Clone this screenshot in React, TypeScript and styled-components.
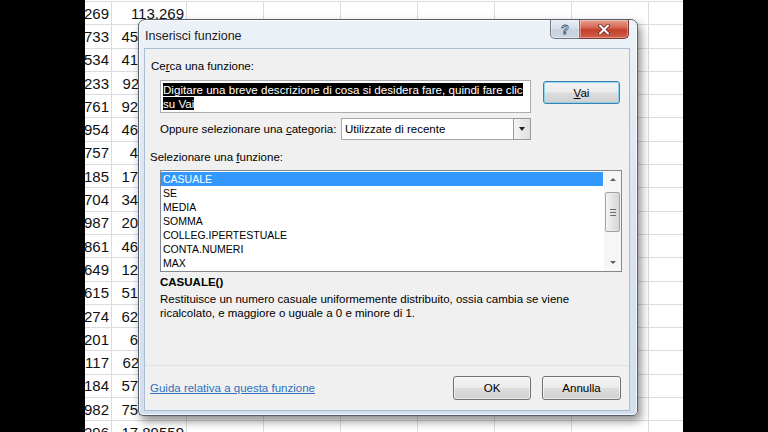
import React from 'react';
import styled, { createGlobalStyle } from 'styled-components';

const GlobalStyle = createGlobalStyle`
	html, body {
		margin: 0;
		padding: 0;
		background: #000;
	}
	body {
		font-family: "Liberation Sans", Arial, sans-serif;
	}
`;

const uiFont = `"Liberation Sans", Arial, sans-serif`;

const Screen = styled.div`
	display: flex;
	width: 768px;
	height: 432px;
	overflow: hidden;
	background: #000;
`;

const Letterbox = styled.div<{ $w: number }>`
	flex: 0 0 ${(p) => p.$w}px;
	background: #000;
`;

const Sheet = styled.div`
	position: relative;
	flex: 1;
	overflow: hidden;
	background: #fff;
`;

const Grid = styled.div`
	display: grid;
	grid-template-columns: 27px 75px repeat(7, 77px);
	grid-auto-rows: 23.3px;
	margin-top: 1px;
	border-top: 1px solid #dadcdd;
`;

const Cell = styled.div`
	display: flex;
	align-items: center;
	justify-content: flex-end;
	box-sizing: border-box;
	padding-right: 2px;
	border-right: 1px solid #dadcdd;
	border-bottom: 1px solid #dadcdd;
	overflow: hidden;
	white-space: nowrap;
	font-family: ${uiFont};
	font-size: 15px;
	color: #111;
`;

/* dialog window */

const Dialog = styled.div`
	position: absolute;
	left: 53px;
	top: 19px;
	width: 500px;
	height: 397px;
	box-sizing: border-box;
	display: flex;
	flex-direction: column;
	padding: 0 8px 5px 6px;
	border: 1px solid #56606d;
	border-radius: 7px 7px 5px 5px;
	background: linear-gradient(#edf2f8, #dbe5f1 40%, #d3dfed);
	box-shadow: 3px 5px 10px rgba(0, 0, 0, 0.45), inset 0 0 0 1px rgba(255, 255, 255, 0.75);
`;

const TitleBar = styled.div`
	display: flex;
	align-items: flex-start;
	flex: 0 0 29px;
`;

const Title = styled.div`
	flex: 1;
	align-self: center;
	padding-top: 2px;
	font-family: ${uiFont};
	font-size: 12.5px;
	color: #1c1c1c;
`;

const CaptionButton = styled.div<{ $close?: boolean }>`
	display: flex;
	align-items: center;
	justify-content: center;
	height: 19px;
	width: ${(p) => (p.$close ? 49 : 30)}px;
	box-sizing: border-box;
	border: 1px solid ${(p) => (p.$close ? '#7b3630' : '#6d7888')};
	border-top: none;
	${(p) => (p.$close ? 'border-left: none;' : '')}
	border-radius: ${(p) => (p.$close ? '0 0 5px 0' : '0 0 0 5px')};
	background: ${(p) =>
		p.$close
			? 'linear-gradient(#e6a08f 0%, #d56a56 40%, #c3402c 55%, #d2604a 100%)'
			: 'linear-gradient(#e9eef4 0%, #d7dfe9 45%, #c6d1de 55%, #cfd8e4 100%)'};
	box-shadow: inset 0 0 0 1px rgba(255, 255, 255, 0.35);
`;

const HelpGlyph = styled.span`
	font-family: ${uiFont};
	font-size: 13px;
	font-weight: bold;
	color: #e9eef4;
	-webkit-text-stroke: 0.8px #4a5566;
	line-height: 1;
`;

const Client = styled.div`
	flex: 1;
	display: flex;
	flex-direction: column;
	background: #f0f0f0;
	box-shadow: 0 0 0 1px #a9bdd6;
	font-family: ${uiFont};
	font-size: 11.5px;
	color: #000;
`;

const Label = styled.div<{ $indent: number; $top: number }>`
	margin-top: ${(p) => p.$top}px;
	padding-left: ${(p) => p.$indent}px;
	line-height: 14px;
	white-space: nowrap;
`;

const Row = styled.div<{ $top: number }>`
	display: flex;
	align-items: flex-start;
	margin-top: ${(p) => p.$top}px;
	padding-left: 15px;
`;

const SearchBox = styled.div`
	width: 371px;
	height: 33px;
	box-sizing: border-box;
	padding: 2px 2px;
	border: 1px solid #abadb3;
	background: #fff;
	font-size: 11.6px;
	line-height: 13.5px;
	white-space: nowrap;
`;

const Selected = styled.span`
	background: #000;
	color: #fff;
`;

const Button = styled.div<{ $w: number; $default?: boolean }>`
	display: flex;
	align-items: center;
	justify-content: center;
	width: ${(p) => p.$w}px;
	height: 24px;
	box-sizing: border-box;
	border: 1px solid ${(p) => (p.$default ? '#3c7fb1' : '#707070')};
	border-radius: 3px;
	background: linear-gradient(#f3f3f3 0%, #ebebeb 48%, #dddddd 52%, #d0d0d0 100%);
	box-shadow: inset 0 0 0 1px ${(p) => (p.$default ? 'rgba(120, 210, 240, 0.8)' : 'rgba(255, 255, 255, 0.6)')};
	font-size: 11.5px;
	color: #000;
`;

const VaiButton = styled(Button)`
	margin-top: 1px;
	margin-left: 12px;
	height: 23px;
`;

const CategoryLabel = styled.div`
	width: 181px;
	align-self: center;
	white-space: nowrap;
`;

const Select = styled.div`
	display: flex;
	width: 190px;
	height: 22px;
	box-sizing: border-box;
	border: 1px solid #a7a7a7;
	background: #fff;
`;

const SelectValue = styled.div`
	flex: 1;
	display: flex;
	align-items: center;
	padding-left: 3px;
	white-space: nowrap;
`;

const DropButton = styled.div`
	display: flex;
	align-items: center;
	justify-content: center;
	width: 18px;
	box-sizing: border-box;
	border: 1px solid #9a9a9a;
	margin: -1px -1px -1px 0;
	background: linear-gradient(to right, #f4f4f4, #dedede);
`;

const DownTriangle = styled.span`
	width: 0;
	height: 0;
	border-left: 3.5px solid transparent;
	border-right: 3.5px solid transparent;
	border-top: 4px solid #222;
`;

const ListBox = styled.div`
	display: flex;
	width: 462px;
	height: 102px;
	box-sizing: border-box;
	margin: 6px 0 0 15px;
	border: 1px solid #828790;
	background: #fff;
`;

const ListItems = styled.div`
	flex: 1;
	padding-top: 1px;
`;

const ListItem = styled.div<{ $selected?: boolean }>`
	height: 14px;
	line-height: 14px;
	padding-left: 2px;
	margin-right: 1px;
	font-size: 10.5px;
	background: ${(p) => (p.$selected ? '#3399ff' : 'transparent')};
	color: ${(p) => (p.$selected ? '#fff' : '#000')};
`;

const ScrollBar = styled.div`
	display: flex;
	flex-direction: column;
	width: 17px;
	background: #f6f6f6;
`;

const ScrollArrow = styled.div<{ $up?: boolean }>`
	display: flex;
	align-items: center;
	justify-content: center;
	height: 17px;
	&::after {
		content: '';
		width: 0;
		height: 0;
		border-left: 3px solid transparent;
		border-right: 3px solid transparent;
		${(p) => (p.$up ? 'border-bottom: 3px solid #5e5e5e;' : 'border-top: 3px solid #5e5e5e;')}
	}
`;

const ScrollTrack = styled.div`
	flex: 1;
`;

const Thumb = styled.div`
	display: flex;
	flex-direction: column;
	align-items: center;
	justify-content: center;
	gap: 2px;
	height: 40px;
	margin: 4px 1px 0 1px;
	box-sizing: border-box;
	border: 1px solid #a2a2a2;
	border-radius: 2px;
	background: linear-gradient(to right, #f5f5f5, #e4e4e4 50%, #d6d6d6);
`;

const Grip = styled.span`
	width: 6px;
	height: 1px;
	background: #6f6f6f;
`;

const Signature = styled.div`
	margin-top: 3px;
	padding-left: 15px;
	line-height: 14px;
	font-weight: bold;
`;

const Description = styled.div`
	margin-top: 3px;
	padding-left: 15px;
	line-height: 14px;
	white-space: nowrap;
`;

const Spacer = styled.div`
	flex: 1;
`;

const Footer = styled.div`
	display: flex;
	align-items: center;
	gap: 11px;
	height: 45px;
	box-sizing: border-box;
	padding: 0 8px 0 5px;
	border-top: 1px solid #e2e2e2;
`;

const HelpLink = styled.a`
	flex: 1;
	color: #2f6fbf;
	text-decoration: underline;
	cursor: pointer;
`;

const colA = ['97.269', '8.733', '6.534', '3.233', '4.761', '1.954', '5.757', '3.185', '2.704', '6.987', '3.861', '7.649', '4.615', '5.274', '8.201', '2.117', '9.184', '1.982', '4.296'];
const colB = ['113.269', '45.96733', '41.72534', '92.11233', '92.84761', '46.37954', '4.75757', '17.44185', '34.86704', '20.51987', '46.32861', '12.67649', '51.29615', '62.48274', '6.35201', '62.09117', '57.63184', '75.18982', '17.89559'];

const functions = ['CASUALE', 'SE', 'MEDIA', 'SOMMA', 'COLLEG.IPERTESTUALE', 'CONTA.NUMERI', 'MAX'];

const CloseIcon = () => (
	<svg width="14" height="11" viewBox="0 0 14 11">
		<path d="M3 1.5 L11 9.5 M11 1.5 L3 9.5" stroke="#6a231c" strokeWidth="3.6" strokeLinecap="round" />
		<path d="M3 1.5 L11 9.5 M11 1.5 L3 9.5" stroke="#fff" strokeWidth="2" strokeLinecap="round" />
	</svg>
);

const App: React.FC = () => {
	return (
		<>
			<GlobalStyle />
			<Screen>
				<Letterbox $w={85} />
				<Sheet>
					<Grid>
						{colA.map((a, i) => (
							<React.Fragment key={i}>
								<Cell>{a}</Cell>
								<Cell>{colB[i]}</Cell>
								{[0, 1, 2, 3, 4, 5, 6].map((c) => (
									<Cell key={c} />
								))}
							</React.Fragment>
						))}
					</Grid>

					<Dialog>
						<TitleBar>
							<Title>Inserisci funzione</Title>
							<CaptionButton>
								<HelpGlyph>?</HelpGlyph>
							</CaptionButton>
							<CaptionButton $close>
								<CloseIcon />
							</CaptionButton>
						</TitleBar>
						<Client>
							<Label $indent={6} $top={10}>
								Ce<u>r</u>ca una funzione:
							</Label>
							<Row $top={7}>
								<SearchBox>
									<Selected>Digitare una breve descrizione di cosa si desidera fare, quindi fare clic</Selected>
									<br />
									<Selected>su Vai</Selected>
								</SearchBox>
								<VaiButton $w={77} $default>
									<span>
										<u>V</u>ai
									</span>
								</VaiButton>
							</Row>
							<Row $top={5}>
								<CategoryLabel>
									Oppure selezionare una <u>c</u>ategoria:
								</CategoryLabel>
								<Select>
									<SelectValue>Utilizzate di recente</SelectValue>
									<DropButton>
										<DownTriangle />
									</DropButton>
								</Select>
							</Row>
							<Label $indent={5} $top={10}>
								Selezionare una <u>f</u>unzione:
							</Label>
							<ListBox>
								<ListItems>
									{functions.map((f, i) => (
										<ListItem key={f} $selected={i === 0}>
											{f}
										</ListItem>
									))}
								</ListItems>
								<ScrollBar>
									<ScrollArrow $up />
									<ScrollTrack>
										<Thumb>
											<Grip />
											<Grip />
											<Grip />
										</Thumb>
									</ScrollTrack>
									<ScrollArrow />
								</ScrollBar>
							</ListBox>
							<Signature>CASUALE()</Signature>
							<Description>
								Restituisce un numero casuale uniformemente distribuito, ossia cambia se viene
								<br />
								ricalcolato, e maggiore o uguale a 0 e minore di 1.
							</Description>
							<Spacer />
							<Footer>
								<HelpLink>Guida relativa a questa funzione</HelpLink>
								<Button $w={78}>OK</Button>
								<Button $w={79}>Annulla</Button>
							</Footer>
						</Client>
					</Dialog>
				</Sheet>
				<Letterbox $w={85} />
			</Screen>
		</>
	);
};

export default App;
